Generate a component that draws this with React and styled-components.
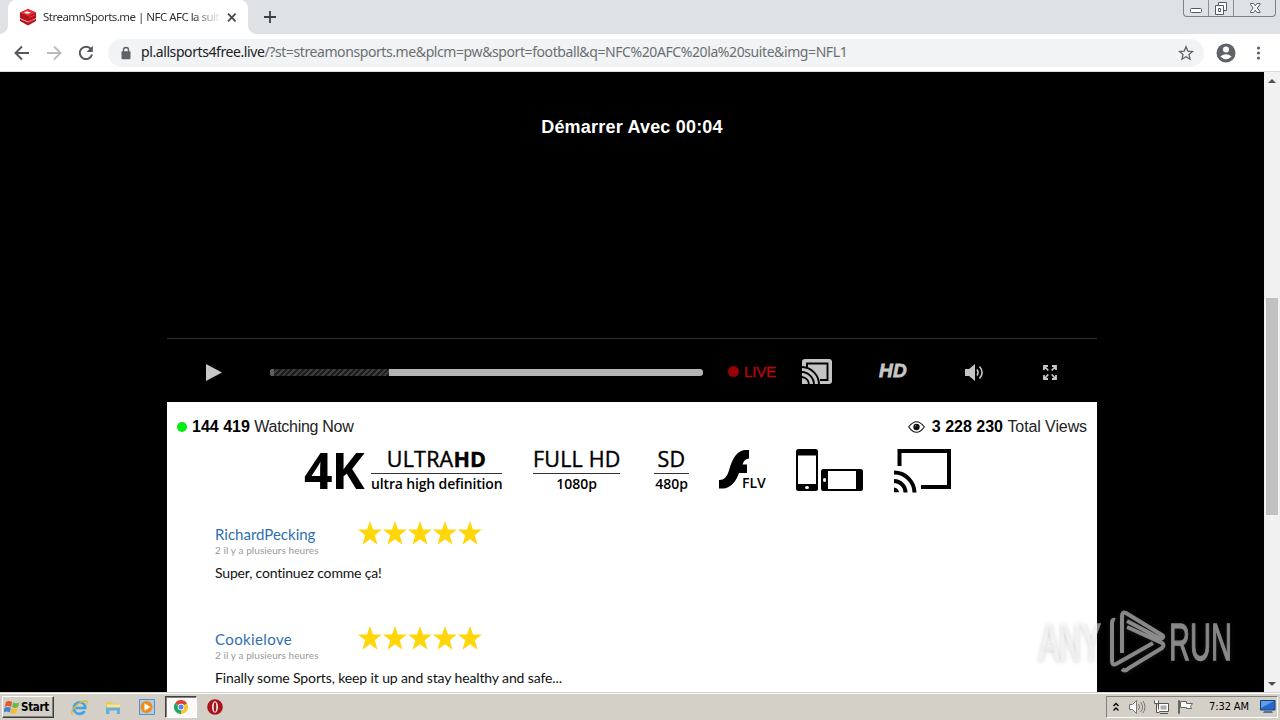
import React from 'react'
import styled, { createGlobalStyle, css } from 'styled-components'

const GlobalStyle = createGlobalStyle`
  * {
    box-sizing: border-box;
  }

  body {
    margin: 0;
    overflow: hidden;
    background: #000;
    font-family: 'Liberation Sans', Arial, sans-serif;
  }

  svg {
    display: block;
    flex: none;
  }
`

const Screen = styled.div`
  display: flex;
  flex-direction: column;
  width: 1280px;
  height: 720px;
  overflow: hidden;
`

/* browser chrome */

const TabStrip = styled.div`
  display: flex;
  flex: none;
  height: 34px;
  padding-left: 8px;
  background: #dee1e6;
`

const Tab = styled.div`
  position: relative;
  display: flex;
  align-items: center;
  width: 240px;
  height: 34px;
  padding-left: 12px;
  border-radius: 8px 8px 0 0;
  background: #fff;

  &::before,
  &::after {
    content: '';
    position: absolute;
    bottom: 0;
    width: 8px;
    height: 8px;
  }
  &::before {
    left: -8px;
    background: radial-gradient(circle at 0 0, transparent 7.5px, #fff 8px);
  }
  &::after {
    right: -8px;
    background: radial-gradient(circle at 100% 0, transparent 7.5px, #fff 8px);
  }
`

const TabTitle = styled.div`
  width: 176px;
  margin-left: 7px;
  white-space: nowrap;
  font: 11.5px/18px 'Noto Sans', sans-serif;
  letter-spacing: -0.52px;
  color: #303236;
  mask-image: linear-gradient(90deg, #000 150px, transparent 178px);
`

const TabClose = styled.div`
  margin-left: 8px;
`

const NewTab = styled.div`
  margin: 10px 0 0 15px;
`

const WindowButtons = styled.div`
  display: flex;
  width: 93px;
  height: 17px;
  margin: 0 4px 0 auto;
  border: 1px solid #7c828c;
  border-top: 0;
  border-radius: 0 0 4px 4px;
`

const WindowButton = styled.div`
  display: flex;
  justify-content: center;
  width: ${({ width }) => width}px;

  & + & {
    border-left: 1px solid #8b9099;
  }
`

const Toolbar = styled.div`
  display: flex;
  align-items: center;
  flex: none;
  height: 38px;
  padding: 0 13px;
  border-bottom: 1px solid #dcdcdc;
  background: #fff;
`

const NavButtons = styled.div`
  display: flex;
  gap: 14px;
  width: 95px;
`

const AddressBar = styled.div`
  display: flex;
  align-items: center;
  width: 1096px;
  height: 28px;
  padding: 0 10px 0 11px;
  border-radius: 14px;
  background: #f1f3f4;
`

const Url = styled.div`
  margin: -2px auto 0 8px;
  white-space: nowrap;
  font: 14px/20px 'Noto Sans', sans-serif;
  letter-spacing: -0.41px;
  color: #6b6f73;

  b {
    font-weight: 400;
    color: #202124;
  }
`

const ToolbarEnd = styled.div`
  display: flex;
  align-items: center;
  gap: 12px;
  margin-left: 10px;
`

/* page */

const Viewport = styled.div`
  display: flex;
  flex: 1;
  min-height: 0;
`

const Page = styled.main`
  display: flex;
  flex-direction: column;
  align-items: center;
  width: 1264px;
  overflow: hidden;
  background: #000;
`

const Video = styled.div`
  flex: none;
  width: 930px;
  height: 267px;
  padding-top: 44px;
  border-bottom: 1px solid #2c2c2c;
  text-align: center;
  font-size: 18px;
  line-height: 22px;
  font-weight: 700;
  letter-spacing: 0.2px;
  color: #fff;
`

const Controls = styled.div`
  display: flex;
  align-items: center;
  flex: none;
  width: 930px;
  height: 63px;
  padding: 4px 0 0 39px;
`

const Control = styled.div`
  margin-left: ${({ gap }) => gap}px;

  ${({ lift }) =>
    lift &&
    css`
      padding-bottom: ${lift}px;
    `}
`

const Progress = styled.div`
  display: flex;
  width: 433px;
  height: 7px;
  margin-left: 48px;
  overflow: hidden;
  border-radius: 3px;
  background: #b4b4b4;

  &::before {
    content: '';
    width: 4px;
    background: #5e5e5e;
  }
`

const Played = styled.div`
  width: 115px;
  background: repeating-linear-gradient(135deg, #1c1c1c 0 2px, #3c3c3c 2px 4px);
`

const Live = styled.div`
  display: flex;
  align-items: center;
  gap: 5px;
  width: 49px;
  height: 16px;
  margin: 0 0 3px 25px;
  white-space: nowrap;
  font-size: 15px;
  -webkit-text-stroke: 0.4px #b8080c;
  letter-spacing: -0.1px;
  color: #b8080c;
`

const Dot = styled.i`
  flex: none;
  width: ${({ size }) => size}px;
  height: ${({ size }) => size}px;
  border-radius: 50%;
  background: ${({ color }) => color};
`

const HdMark = styled.div`
  width: 30px;
  height: 16px;
  font: italic 700 19px/16px 'Liberation Sans', Arial, sans-serif;
  -webkit-text-stroke: 0.8px #c6c6c6;
  letter-spacing: 0.3px;
  color: #c6c6c6;
`

const Panel = styled.section`
  flex: none;
  width: 930px;
  height: 290px;
  overflow: hidden;
  background: #fff;
`

const Stats = styled.div`
  display: flex;
  justify-content: space-between;
  height: 46px;
  padding: 15px 10px 0;
  color: #000;
`

const Stat = styled.div`
  display: flex;
  align-items: center;
  gap: ${({ gap }) => gap}px;
  height: 19px;
  font-size: 16px;
  white-space: nowrap;

  span {
    letter-spacing: ${({ spacing }) => spacing}px;
    color: #222;
  }
`

const Formats = styled.div`
  display: flex;
  height: 48px;
  padding-left: 137px;
  color: #000;
`

const FourK = styled.div`
  width: 67px;
  font: 700 50px/44px 'Open Sans', sans-serif;
  letter-spacing: -1.2px;
`

const Format = styled.div`
  width: ${({ width }) => width}px;
  margin-right: ${({ gap }) => gap}px;
  text-align: center;
  white-space: nowrap;
  font-family: 'Open Sans', sans-serif;
`

const FormatName = styled.div`
  height: 26px;
  border-bottom: 1px solid #333;
  font-size: 21.5px;
  line-height: 22px;
  -webkit-text-stroke: 0.4px #000;
  letter-spacing: 0.2px;
`

const FormatDetail = styled.div`
  font-size: 14px;
  line-height: 20px;
  font-weight: 600;
  letter-spacing: ${({ spacing }) => spacing || 0}px;
`

const Flv = styled.div`
  display: flex;
  width: 47px;
  margin: 1px 30px 0 0;
  white-space: nowrap;

  span {
    margin: 24px 0 0 -9px;
    font: 600 14px/20px 'Open Sans', sans-serif;
  }
`

const Devices = styled.div`
  margin: 1px 31px 0 0;
`

const Cast = styled.div`
  margin-top: 1px;
`

const Comments = styled.div`
  padding: 21px 48px 0;
`

const Comment = styled.article`
  height: 105px;
  font-family: Lato, sans-serif;
`

const CommentHead = styled.div`
  display: flex;
  height: 42px;
`

const Author = styled.div`
  width: 143px;
  padding-top: 7px;
  white-space: nowrap;
  font-size: 15px;
  line-height: 20px;
  letter-spacing: ${({ spacing }) => spacing}px;
  color: #2f6fae;
`

const Time = styled.div`
  padding-top: 1px;
  font-size: 10px;
  line-height: 11px;
  letter-spacing: 0.08px;
  color: #999;
`

const Stars = styled.div`
  display: flex;
  padding-top: 4px;
`

const Message = styled.p`
  margin: 4px 0 0;
  font-size: 14px;
  line-height: 20px;
  letter-spacing: ${({ spacing }) => spacing}px;
  white-space: nowrap;
  color: #111;
`

const ScrollBar = styled.div`
  display: grid;
  grid-template-rows: 17px 1fr 17px;
  width: 16px;
  background: #f1f1f1;
`

const Arrow = styled.i`
  align-self: center;
  justify-self: center;
  width: 0;
  border: 4px solid transparent;
  ${({ up }) =>
    up
      ? css`
          border-top: 0;
          border-bottom-color: #505050;
        `
      : css`
          border-bottom: 0;
          border-top-color: #505050;
        `}
`

const Thumb = styled.div`
  width: 12px;
  height: 217px;
  margin: 209px 2px 0;
  background: #c1c1c1;
`

const Watermark = styled.svg`
  position: absolute;
  left: 1030px;
  top: 602px;
  filter: drop-shadow(0 1px 2px rgba(90, 90, 90, 0.55));
`

/* taskbar */

const TaskBar = styled.footer`
  display: flex;
  flex: none;
  height: 28px;
  padding: 2px 2px 0;
  border-top: 1px solid #d4d0c8;
  background: linear-gradient(#fff 1px, #d4d0c8 1px);
`

const StartButton = styled.div`
  display: flex;
  align-items: center;
  gap: 1px;
  width: 52px;
  height: 22px;
  margin-top: 1px;
  padding-left: 1px;
  border: 1px solid;
  border-color: #fff #404040 #404040 #fff;
  box-shadow: inset -1px -1px #808080;
  font: 700 11.5px/20px 'DejaVu Sans Condensed', 'DejaVu Sans', sans-serif;
  letter-spacing: -0.3px;
  color: #000;
`

const Launcher = styled.div`
  display: flex;
  align-items: center;
  height: 24px;
  margin-left: 8px;
`

const LauncherItem = styled.div`
  display: flex;
  align-items: center;
  justify-content: center;
  width: ${({ active }) => (active ? 32 : 34)}px;
  height: 22px;

  ${({ active }) =>
    active &&
    css`
      margin: 0 1px;
      border: 1px solid;
      border-color: #404040 #fff #fff #404040;
      box-shadow: inset 1px 1px #808080;
      background: #fbfaf9;
    `}
`

const Tray = styled.div`
  display: flex;
  align-items: center;
  width: 172px;
  height: 22px;
  margin: 1px 0 0 auto;
  padding-left: 6px;
  border: 1px solid;
  border-color: #808080 #fff #fff #808080;
`

const TrayIcon = styled.div`
  margin-left: ${({ gap }) => gap}px;
`

const Clock = styled.div`
  width: 42px;
  margin: 0 9px 0 15px;
  white-space: nowrap;
  font: 11px/20px 'DejaVu Sans Condensed', 'DejaVu Sans', sans-serif;
  letter-spacing: -0.1px;
  color: #000;
`

const Favicon = () => (
  <svg width="16" height="18" viewBox="0 0 16 18">
    <path d="M0 4.5 8 1l8 3.5V13l-8 4.5L0 13z" fill="#b3141c" />
    <path d="M0 4.5 8 1l8 3.5L8 8z" fill="#e8323a" />
    <path d="M0 10.500 8 14l8-3.500" fill="none" stroke="#f7c6c8" strokeWidth=".9" />
    <path d="m4 4.5 3-1.2 2 .9 2-.3-2 1.7-3-.2z" fill="#fff" />
    <path d="M9 9.5 15 7M9 14l5-2.3" stroke="#e23b40" strokeWidth="1.2" />
  </svg>
)

const WindowGlyph = ({ children }) => (
  <svg width="24" height="16" fill="#fff" stroke="#555b64">
    {children}
  </svg>
)

const CastIcon = () => (
  <svg width="30" height="26" viewBox="0 0 30 26" fill="none">
    <path d="M0 3a3 3 0 0 1 3-3h24a3 3 0 0 1 3 3v19a3 3 0 0 1-3 3H0z" fill="#c4c4c4" />
    <path d="M5 8V4.500h20.500V21H18" stroke="#000" strokeWidth="1.900" />
    <path d="M0 8A17.500 17.500 0 0 1 17 25.500M0 13A12.700 12.700 0 0 1 12 25.500M0 18a8 8 0 0 1 7 7.500" stroke="#000" strokeWidth="1.900" />
  </svg>
)

const VolumeIcon = () => (
  <svg width="19" height="17" viewBox="0 0 19 17" fill="none">
    <path d="M0 5h4l6-5v17l-6-5H0z" fill="#c4c4c4" />
    <path d="M12 5.5q2 3 0 6M14.500 2.500q5.200 6 0 12" stroke="#c4c4c4" strokeWidth="1.6" />
  </svg>
)

const ExpandIcon = () => (
  <svg width="14" height="15" viewBox="0 0 14 15" fill="none" stroke="#c8c8c8" strokeWidth="1.800">
    <path d="M1 5V1h4M1 1l4.300 4.500M9 1h4v4M13 1 8.700 5.500M1 10v4h4M1 14l4.300-4.500M9 14h4v-4M13 14 8.700 9.500" />
  </svg>
)

const EyeIcon = () => (
  <svg width="17" height="12" viewBox="0 0 17 12">
    <path d="M.7 6q7.8-10.600 15.600 0-7.800 10.600-15.600 0z" fill="#fff" stroke="#111" strokeWidth="1.1" />
    <circle cx="8.5" cy="6" r="3.200" fill="#111" />
    <circle cx="7.5" cy="4.7" r=".7" fill="#999" />
  </svg>
)

const FlashIcon = () => (
  <svg width="32" height="42" viewBox="0 0 32 42">
    <path d="M30 1v8.500q-5 .3-6.500 6H28v8.500h-8Q14.500 39 4 39.500H0V31q7 .5 10-9.500Q15 2 26 1z" fill="#000" />
  </svg>
)

const DevicesIcon = () => (
  <svg width="67" height="42" viewBox="0 0 67 42">
    <rect width="22" height="42" rx="2.5" />
    <path d="M2 6.500h18v28.500H2z" fill="#fff" />
    <ellipse cx="11" cy="38.500" rx="2" ry="1.600" fill="#fff" />
    <rect x="25" y="20" width="42" height="22" rx="2.5" />
    <path d="M32 22h28v18H32z" fill="#fff" />
    <ellipse cx="28.500" cy="31" rx="1.5" ry="2" fill="#fff" />
  </svg>
)

const BigCastIcon = () => (
  <svg width="58" height="44" viewBox="0 0 58 44" fill="none" stroke="#000" strokeWidth="4">
    <path d="M5.500 17V2h49.500v36H27" />
    <path d="M0 23.500A20.500 20.500 0 0 1 20.500 43.500M0 32a11.500 11.500 0 0 1 11.500 11.500" />
    <path d="M0 38.500q4.500.5 5 4.800H0z" fill="#000" stroke="none" />
  </svg>
)

const Star = () => (
  <svg width="25" height="25" viewBox="0 0 25 25">
    <path d="m12 0 3 8.600h8.800l-7 5.700 2.700 9.500-7.500-5.600L4.500 23.800l2.700-9.500L0 8.600h9z" fill="#ffd60a" />
  </svg>
)

const comments = [
  {
    author: 'RichardPecking',
    authorSpacing: 0,
    text: 'Super, continuez comme ça!',
    textSpacing: -0.18,
  },
  {
    author: 'Cookielove',
    authorSpacing: 0.38,
    text: 'Finally some Sports, keep it up and stay healthy and safe...',
    textSpacing: -0.12,
  },
]

const BrowserTabs = () => (
  <TabStrip>
    <Tab>
      <Favicon />
      <TabTitle>StreamnSports.me | NFC AFC la suit</TabTitle>
      <TabClose>
        <svg width="10" height="9" stroke="#45484c" strokeWidth="1.8">
          <path d="m1 .7 7.600 7.600M8.600.7 1 8.300" />
        </svg>
      </TabClose>
    </Tab>
    <NewTab>
      <svg width="14" height="14" stroke="#3c4043" strokeWidth="1.8">
        <path d="M1 7h12M7 1v12" />
      </svg>
    </NewTab>
    <WindowButtons>
      <WindowButton width={24}>
        <WindowGlyph>
          <rect x="6.500" y="8.500" width="11" height="4" rx="1" />
        </WindowGlyph>
      </WindowButton>
      <WindowButton width={25}>
        <WindowGlyph>
          <path d="M9.500 2.500h8v8h-8z" />
          <path d="M6.500 5.500h8v9h-8z" />
          <path d="M9.500 8.500h2v3h-2z" />
        </WindowGlyph>
      </WindowButton>
      <WindowButton width={42}>
        <WindowGlyph>
          <path d="M7.500 3.500h3l1.800 2.300 1.700-2.300h3v1L14.300 8l2.700 3.500v1h-3l-1.700-2.300-1.800 2.300h-3v-1L10.200 8 7.500 4.500z" />
        </WindowGlyph>
      </WindowButton>
    </WindowButtons>
  </TabStrip>
)

const BrowserToolbar = () => (
  <Toolbar>
    <NavButtons>
      <svg width="18" height="18" fill="none" stroke="#55585c" strokeWidth="1.9">
        <path d="M16 9H3M9 2.500 2.500 9 9 15.500" />
      </svg>
      <svg width="18" height="18" fill="none" stroke="#b9bbbe" strokeWidth="1.9">
        <path d="M2 9h13M9 2.500 15.500 9 9 15.500" />
      </svg>
      <svg width="18" height="18" fill="none" stroke="#55585c" strokeWidth="2">
        <path d="M14 5.200A6.200 6.200 0 1 0 15 10.500" />
        <path d="M15.800 1.800V8H9.600z" fill="#55585c" stroke="none" />
      </svg>
    </NavButtons>
    <AddressBar>
      <svg width="14" height="14" viewBox="0 0 14 14">
        <path d="M4.500 6V4a2.500 2.500 0 0 1 5 0v2" fill="none" stroke="#5f6368" strokeWidth="1.4" />
        <rect x="2.500" y="5.300" width="9" height="8" rx="1" fill="#5f6368" />
      </svg>
      <Url>
        <b>pl.allsports4free.live</b>
        /?st=streamonsports.me&amp;plcm=pw&amp;sport=football&amp;q=NFC%20AFC%20la%20suite&amp;img=NFL1
      </Url>
      <svg width="16" height="16" viewBox="0 0 16 16" fill="none" stroke="#5f6368" strokeWidth="1.3">
        <path d="m8 1.800 1.800 4.300 4.700.4-3.500 3.100 1 4.600L8 11.800l-4 2.400 1-4.600-3.500-3.100 4.700-.4z" />
      </svg>
    </AddressBar>
    <ToolbarEnd>
      <svg width="24" height="20" viewBox="0 0 24 20">
        <circle cx="12" cy="10" r="9.500" fill="#5f6368" />
        <circle cx="12" cy="6.500" r="3" fill="#fff" />
        <path d="M6.300 13.500q5.700-4.500 11.400 0-5.700 5.400-11.400 0z" fill="#fff" />
      </svg>
      <svg width="16" height="16" fill="#5f6368">
        <circle cx="8.500" cy="3" r="1.600" />
        <circle cx="8.500" cy="8" r="1.600" />
        <circle cx="8.500" cy="13" r="1.600" />
      </svg>
    </ToolbarEnd>
  </Toolbar>
)

const PlayerControls = () => (
  <Controls>
    <svg width="16" height="17" fill="#c8c8c8">
      <path d="M0 0 16 8.500 0 17z" />
    </svg>
    <Progress>
      <Played />
    </Progress>
    <Live>
      <Dot size={11} color="#960006" />
      LIVE
    </Live>
    <Control gap={25} lift={2}>
      <CastIcon />
    </Control>
    <Control gap={47} lift={3}>
      <HdMark>HD</HdMark>
    </Control>
    <Control gap={56}>
      <VolumeIcon />
    </Control>
    <Control gap={59}>
      <ExpandIcon />
    </Control>
  </Controls>
)

const FormatRow = () => (
  <Formats>
    <FourK>4K</FourK>
    <Format width={131} gap={31}>
      <FormatName>
        ULTRA<b>HD</b>
      </FormatName>
      <FormatDetail spacing={-0.15}>ultra high definition</FormatDetail>
    </Format>
    <Format width={87} gap={34}>
      <FormatName>FULL HD</FormatName>
      <FormatDetail>1080p</FormatDetail>
    </Format>
    <Format width={35} gap={30}>
      <FormatName>SD</FormatName>
      <FormatDetail>480p</FormatDetail>
    </Format>
    <Flv>
      <FlashIcon />
      <span>FLV</span>
    </Flv>
    <Devices>
      <DevicesIcon />
    </Devices>
    <Cast>
      <BigCastIcon />
    </Cast>
  </Formats>
)

const AnyRunMark = () => (
  <Watermark width="210" height="80" viewBox="0 0 210 80">
    <g fill="#fff" stroke="#fff" strokeWidth="1.3" opacity=".5" fontFamily="Liberation Sans, sans-serif" fontSize="51">
      <text x="9" y="57.500" textLength="62" lengthAdjust="spacingAndGlyphs">ANY</text>
      <text x="139" y="57.500" textLength="63" lengthAdjust="spacingAndGlyphs">RUN</text>
    </g>
    <path
      d="M85 18q-3-1-3 3v38q0 5 4 3l37-21M92 51V14q0-5 4-3l36 22q3 2-1 4L97 19M92 67q3 3 7-1l33-20q3-3 0-5L97 25"
      fill="none"
      stroke="#fff"
      strokeWidth="4"
      strokeLinejoin="round"
      opacity=".5"
    />
  </Watermark>
)

const Taskbar = () => (
  <TaskBar>
    <StartButton>
      <svg width="16" height="16" viewBox="0 0 16 16">
        <path d="M2 3q3-2 6 0L7 8Q4 6 .5 8z" fill="#e2572b" />
        <path d="M9 3.300q3 1.800 6.500 0L14 8q-3 1.800-6 0z" fill="#72b744" />
        <path d="M.3 9q3.500-2 6.500 0l-1 4.500q-3-2-6 0z" fill="#3f83cf" />
        <path d="M7.700 9.200q3 1.800 6 0l-1.300 4.600q-3 1.800-6 0z" fill="#f5bd2c" />
      </svg>
      Start
    </StartButton>
    <Launcher>
      <LauncherItem>
        <svg width="17" height="17" viewBox="0 0 17 17" fill="none">
          <path d="M13.500 12A5.800 5.800 0 1 1 14.300 9H4.500" stroke="#43a5df" strokeWidth="2.6" />
          <path d="M1.500 15.500Q-1 12 6 6t10-3.500q.8 1-1 3.500" stroke="#e4b73a" strokeWidth="1.3" />
        </svg>
      </LauncherItem>
      <LauncherItem>
        <svg width="16" height="16" viewBox="0 0 16 16">
          <path d="M1 3h6l1 1.500h6V9H1z" fill="#e9c95b" />
          <path d="M2 5.500h13V10H2z" fill="#f6e59b" />
          <path d="M1 8.500h14V15h-3v-3.500H4.500V15H1z" fill="#68aed6" />
        </svg>
      </LauncherItem>
      <LauncherItem>
        <svg width="16" height="16" viewBox="0 0 16 16">
          <path d="M.5.500h15v15H.5z" fill="#a9cfec" stroke="#5a90bd" />
          <circle cx="7.500" cy="8" r="6" fill="#f18a16" />
          <path d="m5.500 4.300 6 3.700-6 3.700z" fill="#fff" />
        </svg>
      </LauncherItem>
      <LauncherItem active>
        <svg width="14" height="14" viewBox="0 0 14 14">
          <path d="M7 7 .9 3.500A7 7 0 0 1 13.100 3.500z" fill="#dc4437" />
          <path d="M7 7 .9 3.500A7 7 0 0 0 7 14z" fill="#21a464" />
          <path d="M7 7v7a7 7 0 0 0 6.100-10.500z" fill="#f8c72c" />
          <circle cx="7" cy="7" r="3.300" fill="#fff" />
          <circle cx="7" cy="7" r="2.500" fill="#4689e9" />
        </svg>
      </LauncherItem>
      <LauncherItem>
        <svg width="16" height="16" viewBox="0 0 16 16">
          <circle cx="8" cy="8" r="7.800" fill="#a91418" />
          <ellipse cx="8" cy="8" rx="3" ry="5.800" fill="#f5f0ef" />
          <ellipse cx="8" cy="8" rx="1.300" ry="4.800" fill="#a91418" />
        </svg>
      </LauncherItem>
    </Launcher>
    <Tray>
      <TrayIcon gap={0}>
        <svg width="6" height="10" fill="none" stroke="#000" strokeWidth="1.3">
          <path d="m.5 4 2.500-2.500L5.500 4M.5 8.500 3 6l2.500 2.500" />
        </svg>
      </TrayIcon>
      <TrayIcon gap={10}>
        <svg width="17" height="16" viewBox="0 0 17 16" fill="none" stroke="#777">
          <path d="M.5 5.500h3l4-4v13l-4-4h-3z" fill="#fff" />
          <path d="M9.500 5q2 3 0 6M11.500 3q4 5 0 10M14 2q4 6 0 12" />
        </svg>
      </TrayIcon>
      <TrayIcon gap={7}>
        <svg width="17" height="16" viewBox="0 0 17 16" stroke="#555" fill="#fff">
          <path d="M5.500 4.500h10v8h-10zM7 14.500h8" />
          <path d="M7.500 6.500h6v4h-6z" fill="#aaa" stroke="none" />
          <path d="M1.500 1.500v3h4v-3M3.500 4.500v9h3" />
        </svg>
      </TrayIcon>
      <TrayIcon gap={8}>
        <svg width="16" height="16" viewBox="0 0 16 16" stroke="#666" fill="#fff">
          <path d="M.5 1.500h1v13h-1zM2.500 2.500h6v2h6l-2 3 1 2h-5v-1h-6z" />
        </svg>
      </TrayIcon>
      <Clock>7:32 AM</Clock>
      <svg width="16" height="14" viewBox="0 0 16 14">
        <path d="M.5.500h14.500v9.500H.5z" fill="#2868c8" stroke="#183d78" />
        <path d="M1 1h13L1 8z" fill="#5da0e8" />
        <path d="M4 11h8l1 2H3z" fill="#577496" />
      </svg>
    </Tray>
  </TaskBar>
)

const App = () => {
  return (
    <Screen>
      <GlobalStyle />
      <BrowserTabs />
      <BrowserToolbar />
      <Viewport>
        <Page>
          <Video>Démarrer Avec 00:04</Video>
          <PlayerControls />
          <Panel>
            <Stats>
              <Stat gap={5} spacing={-0.28}>
                <Dot size={10} color="#00ee10" />
                <div>
                  <b>144 419</b> <span>Watching Now</span>
                </div>
              </Stat>
              <Stat gap={7} spacing={-0.1}>
                <EyeIcon />
                <div>
                  <b>3 228 230</b> <span>Total Views</span>
                </div>
              </Stat>
            </Stats>
            <FormatRow />
            <Comments>
              {comments.map(({ author, authorSpacing, text, textSpacing }) => (
                <Comment key={author}>
                  <CommentHead>
                    <Author spacing={authorSpacing}>
                      {author}
                      <Time>2 il y a plusieurs heures</Time>
                    </Author>
                    <Stars>
                      {[1, 2, 3, 4, 5].map((n) => (
                        <Star key={n} />
                      ))}
                    </Stars>
                  </CommentHead>
                  <Message spacing={textSpacing}>{text}</Message>
                </Comment>
              ))}
            </Comments>
          </Panel>
        </Page>
        <ScrollBar>
          <Arrow up />
          <Thumb />
          <Arrow />
        </ScrollBar>
      </Viewport>
      <Taskbar />
      <AnyRunMark />
    </Screen>
  )
}

export default App
